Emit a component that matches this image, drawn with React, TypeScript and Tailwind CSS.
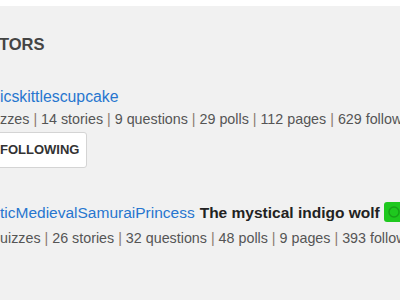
import React from "react";

interface Creator {
  name: string;
  title?: string;
  stats: string[];
  following?: boolean;
  badge?: boolean;
}

const creators: Creator[] = [
  {
    name: "icskittlescupcake",
    stats: ["zzes", "14 stories", "9 questions", "29 polls", "112 pages", "629 followers"],
    following: true,
  },
  {
    name: "ticMedievalSamuraiPrincess",
    title: "The mystical indigo wolf",
    stats: ["uizzes", "26 stories", "32 questions", "48 polls", "9 pages", "393 followers"],
    badge: true,
  },
];

function StatsLine({ stats }: { stats: string[] }) {
  return (
    <div className="h-[20px] text-[14.3px] leading-[20px] text-[#555]">
      {stats.map((s, i) => (
        <React.Fragment key={s}>
          {i > 0 && <span className="text-[#8a7a70]"> | </span>}
          {s}
        </React.Fragment>
      ))}
    </div>
  );
}

export default function App() {
  return (
    <div
      className="w-[400px] h-[300px] overflow-hidden whitespace-nowrap bg-white"
      style={{ fontFamily: '"Liberation Sans", Arial, sans-serif' }}
    >
      <div className="h-[6px] bg-white" />
      <div className="h-[294px] bg-[#f1f1f1] pt-[28px]">
        {/* Section title */}
        <h2 className="h-[20px] -ml-[1px] text-[16.5px] leading-[20px] font-bold text-[#444]">TORS</h2>

        {/* First creator */}
        <div className="mt-[33px]">
          <a className="block h-[20px] text-[15.8px] leading-[20px] text-[#2776cf]">{creators[0].name}</a>
          <div className="mt-[2px]">
            <StatsLine stats={creators[0].stats} />
          </div>
          <button className="mt-[3px] -ml-[12px] h-[36px] pl-[11px] pr-[7px] rounded-[3px] border border-[#d4d4d4] bg-white text-[13px] font-bold text-[#333]">
            FOLLOWING
          </button>
        </div>

        {/* Second creator */}
        <div className="mt-[35px]">
          <div className="flex items-center h-[20px] w-[460px]">
            <a className="text-[15.5px] leading-[20px] text-[#2776cf]">{creators[1].name}</a>
            <span className="ml-[5px] text-[15.5px] leading-[20px] font-bold text-[#222]">{creators[1].title}</span>
            <span className="ml-[4px] flex items-center h-[20px] w-[40px] shrink-0 rounded-[3px] bg-[#1ec81e] pl-[4px] -mt-[3px]">
              <svg width="12" height="12" viewBox="0 0 12 12">
                <circle cx="6" cy="6" r="5" fill="none" stroke="#18a018" strokeWidth="1.5" />
              </svg>
            </span>
          </div>
          <div className="mt-[5px]">
            <StatsLine stats={creators[1].stats} />
          </div>
        </div>
      </div>
    </div>
  );
}
